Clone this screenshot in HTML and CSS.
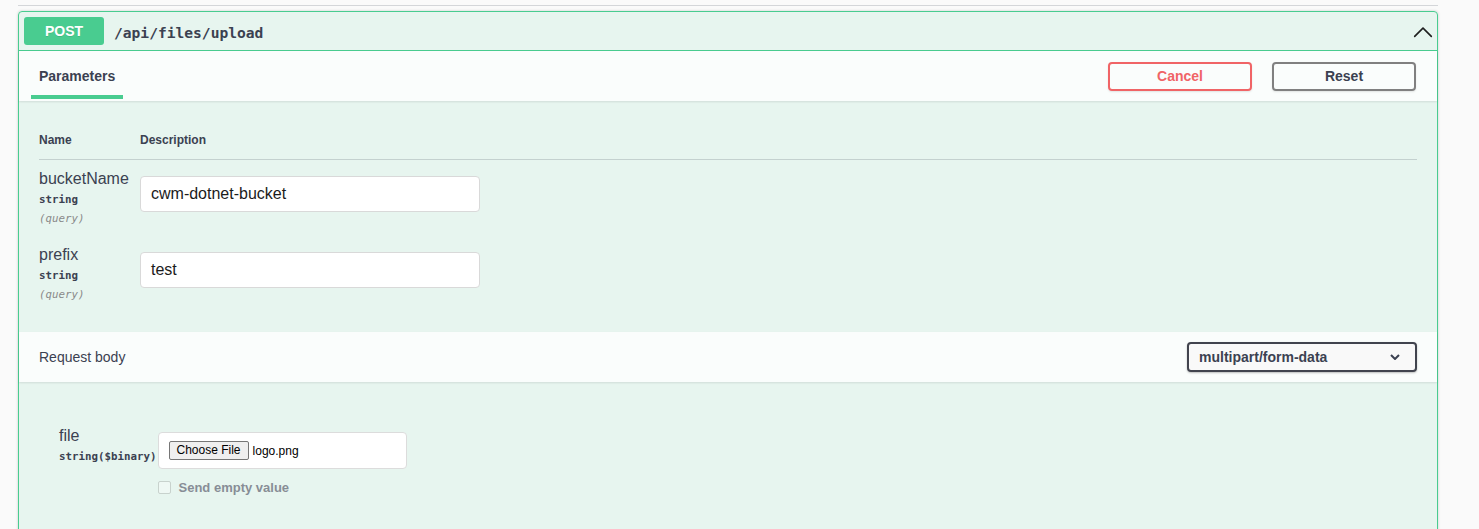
FILE: index.html
```html
<!DOCTYPE html>
<html lang="en">
<head>
<meta charset="utf-8">
<title>POST /api/files/upload</title>
<link rel="stylesheet" href="styles.css">
</head>
<body>
<div class="wrapper">
  <div class="topline"></div>
  <div class="opblock">
    <div class="summary">
      <span class="method">POST</span>
      <span class="path">/api/files/upload</span>
      <svg class="arrow" viewBox="0 0 20 20" aria-hidden="true"><path d="M17.418 14.908c-.271.271-.702.271-.973 0L10 8.464l-6.445 6.444c-.271.271-.702.271-.973 0s-.271-.702 0-.973l6.931-6.932c.135-.135.313-.2.487-.2s.352.065.487.2l6.932 6.932c.271.271.271.701-.001.973z"/></svg>
    </div>

    <div class="section-header">
      <div class="tab">
        <span class="tab-label">Parameters</span>
        <span class="tab-bar"></span>
      </div>
      <div class="actions">
        <button class="btn cancel">Cancel</button>
        <button class="btn">Reset</button>
      </div>
    </div>

    <div class="params">
      <div class="ptable">
        <div class="th">Name</div>
        <div class="th">Description</div>

        <div class="pcell">
          <div class="pname">bucketName</div>
          <div class="ptype">string</div>
          <div class="pin">(query)</div>
        </div>
        <div class="pcell">
          <div class="field">cwm-dotnet-bucket</div>
        </div>

        <div class="pcell">
          <div class="pname">prefix</div>
          <div class="ptype">string</div>
          <div class="pin">(query)</div>
        </div>
        <div class="pcell">
          <div class="field">test</div>
        </div>
      </div>
    </div>

    <div class="section-header rb-header">
      <span class="rb-title">Request body</span>
      <div class="select">
        <span>multipart/form-data</span>
        <svg class="select-arrow" viewBox="0 0 10 6" aria-hidden="true"><polyline points="1,1 5,5 9,1"/></svg>
      </div>
    </div>

    <div class="rb-body">
      <div class="file-row">
        <div class="file-name">
          <div class="pname">file</div>
          <div class="ptype">string($binary)</div>
        </div>
        <div class="file-desc">
          <div class="filebox">
            <span class="choose">Choose File</span>
            <span class="filename">logo.png</span>
          </div>
          <div class="toggle">
            <span class="checkbox"></span>
            <span class="toggle-label">Send empty value</span>
          </div>
        </div>
      </div>
    </div>
  </div>
</div>
</body>
</html>
```

FILE: styles.css
```css
* {
  box-sizing: border-box;
}

html,
body {
  margin: 0;
  height: 529px;
  overflow: hidden;
}

body {
  background: #fafafa;
  font-family: "Liberation Sans", Arial, sans-serif;
  color: #3b4151;
}

.wrapper {
  width: 1420px;
  margin-left: 18px;
  padding-top: 5px;
}

.topline {
  height: 1px;
  background: #d4d6d9;
  margin-bottom: 5px;
}

.opblock {
  border: 1px solid #49cc90;
  border-radius: 4px;
  background: rgba(73, 204, 144, 0.1);
  box-shadow: 0 0 3px rgba(0, 0, 0, 0.19);
}

/* summary */
.summary {
  display: flex;
  align-items: center;
  padding: 5px 2px 5px 5px;
  border-bottom: 1px solid #49cc90;
}

.method {
  width: 80px;
  height: 28px;
  display: flex;
  align-items: center;
  justify-content: center;
  background: #49cc90;
  color: #fff;
  font-size: 14px;
  font-weight: 700;
  border-radius: 3px;
  text-shadow: 0 1px 0 rgba(0, 0, 0, 0.1);
}

.path {
  flex: 1;
  padding: 2px 0 0 10px;
  font-family: "DejaVu Sans Mono", "Liberation Mono", monospace;
  font-weight: 700;
  font-size: 14.6px;
  color: #3b4151;
}

.arrow {
  width: 24px;
  height: 24px;
  fill: #1f1f1f;
}

/* section headers */
.section-header {
  display: flex;
  align-items: center;
  justify-content: space-between;
  min-height: 50px;
  padding: 0 21px 0 12px;
  background: rgba(255, 255, 255, 0.8);
  box-shadow: 0 1px 2px rgba(0, 0, 0, 0.1);
}

.tab {
  align-self: flex-start;
  display: flex;
  flex-direction: column;
  padding-top: 17px;
}

.tab-label {
  padding: 0 8px;
  font-size: 14px;
  font-weight: 700;
  line-height: 16px;
}

.tab-bar {
  height: 4px;
  margin-top: 11px;
  background: #49cc90;
}

.actions {
  display: flex;
  gap: 20px;
}

.btn {
  width: 144px;
  height: 29px;
  padding: 0;
  border: 2px solid #808080;
  border-radius: 4px;
  background: transparent;
  font-family: inherit;
  font-size: 14px;
  font-weight: 700;
  color: #3b4151;
  box-shadow: 0 1px 2px rgba(0, 0, 0, 0.1);
}

.btn.cancel {
  border-color: #f06466;
  color: #f06466;
}

/* parameters */
.params {
  padding: 20px;
}

.ptable {
  display: grid;
  grid-template-columns: 101px 1fr;
}

.th {
  font-size: 12px;
  font-weight: 700;
  line-height: 14px;
  padding: 12px 0;
  border-bottom: 1px solid rgba(59, 65, 81, 0.2);
}

.pcell {
  padding: 10px 0;
}

.pname {
  font-size: 16px;
  line-height: 18px;
  color: #3b4151;
}

.ptype {
  padding: 5px 0;
  font-family: "DejaVu Sans Mono", "Liberation Mono", monospace;
  font-size: 10.8px;
  font-weight: 700;
  line-height: 14px;
  color: #3b4151;
}

.pin {
  font-family: "DejaVu Sans Mono", "Liberation Mono", monospace;
  font-size: 10.8px;
  font-style: italic;
  line-height: 14px;
  color: #8a8a8a;
}

.field {
  width: 340px;
  height: 36px;
  margin-top: 6px;
  padding: 8px 10px;
  border: 1px solid #d9d9d9;
  border-radius: 4px;
  background: #fff;
  font-size: 16px;
  line-height: 18px;
  color: #1b1b1b;
}

/* request body */
.rb-header {
  padding: 0 20px;
}

.rb-title {
  font-size: 14px;
}

.select {
  display: flex;
  align-items: center;
  justify-content: space-between;
  width: 230px;
  height: 30px;
  padding: 0 15px 0 10px;
  border: 2px solid #41444e;
  border-radius: 4px;
  background: #f9f9f9;
  font-size: 14px;
  font-weight: 700;
  color: #3b4151;
  box-shadow: 0 1px 2px 0 rgba(0, 0, 0, 0.25);
}

.select-arrow {
  width: 10px;
  height: 6px;
  fill: none;
  stroke: #3b4151;
  stroke-width: 2;
}

.rb-body {
  padding: 45px 20px 60px 40px;
}

.file-row {
  display: flex;
}

.file-name {
  padding-right: 1px;
}

.filebox {
  display: flex;
  align-items: center;
  width: 249px;
  height: 37px;
  margin-top: 5px;
  padding: 8px 10px;
  border: 1px solid #dcdcdc;
  border-radius: 4px;
  background: #fff;
}

.choose {
  height: 19px;
  padding: 0 7px;
  border: 1px solid #767676;
  border-radius: 2px;
  background: #efefef;
  font-size: 12px;
  line-height: 17px;
  color: #000;
}

.filename {
  margin-left: 4px;
  font-size: 12px;
  color: #000;
}

.toggle {
  display: flex;
  align-items: center;
  gap: 8px;
  margin-top: 11px;
}

.checkbox {
  width: 13px;
  height: 13px;
  border: 1px solid #c8d2cd;
  border-radius: 2px;
  background: rgba(255, 255, 255, 0.35);
}

.toggle-label {
  font-size: 13px;
  font-weight: 700;
  line-height: 15px;
  color: #878d96;
}
```
